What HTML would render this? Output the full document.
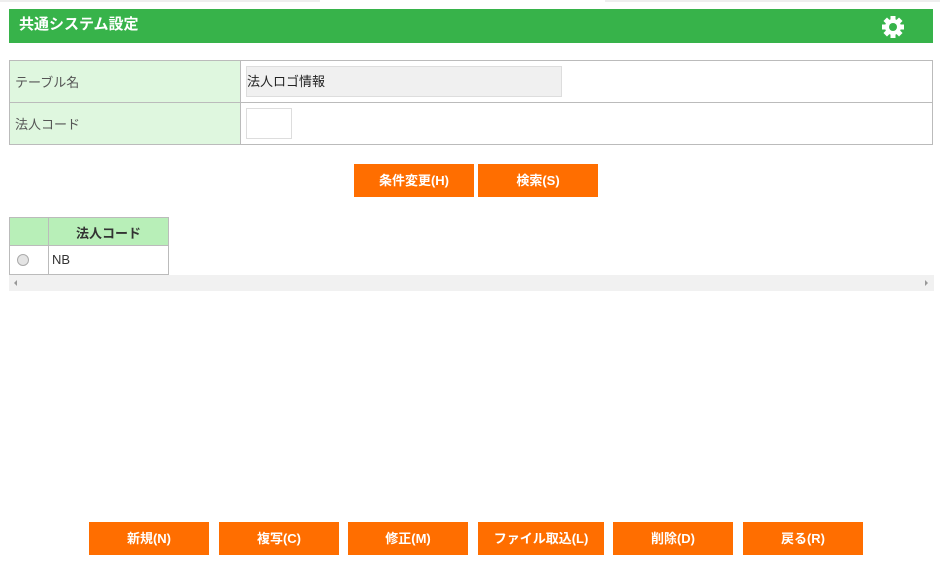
<!DOCTYPE html>
<html><head><meta charset="utf-8"><style>
*{box-sizing:border-box;margin:0;padding:0}
body{width:940px;height:566px;background:#fff;font-family:"Liberation Sans","Noto Sans CJK JP",sans-serif;font-size:13px;color:#333;position:relative;overflow:hidden}
.abs{position:absolute}
.hdr{left:9px;top:9px;width:924px;height:34px;background:#37b34a;color:#fff;font-weight:bold;font-size:15px;line-height:32px;padding-left:10px}
.btn{position:absolute;height:33px;background:#ff6e00;color:#fff;font-weight:bold;font-size:13px;text-align:center;line-height:33px}
</style></head><body>
<div class="abs" style="left:0;top:0;width:320px;height:2px;background:#eee"></div>
<div class="abs" style="left:605px;top:0;width:335px;height:2px;background:#eee"></div>
<div class="abs hdr">共通システム設定</div>
<svg class="abs" style="left:881px;top:15px" width="24" height="24" viewBox="0 0 24 24"><g fill="#fff"><circle cx="12" cy="12" r="8"/><rect x="9.5" y="1" width="5" height="22"/><rect x="1" y="9.5" width="22" height="5"/><rect x="9.5" y="1" width="5" height="22" transform="rotate(45 12 12)"/><rect x="9.5" y="1" width="5" height="22" transform="rotate(-45 12 12)"/></g><circle cx="12" cy="12" r="4" fill="#37b34a"/></svg>

<div class="abs" style="left:9px;top:60px;width:924px;height:85px;border:1px solid #bbb"></div>
<div class="abs" style="left:10px;top:61px;width:231px;height:83px;background:#dff7df;border-right:1px solid #bbb"></div>
<div class="abs" style="left:10px;top:102px;width:922px;height:1px;background:#bbb"></div>
<div class="abs" style="left:15px;top:72px;color:#555">テーブル名</div>
<div class="abs" style="left:15px;top:114px;color:#555">法人コード</div>
<div class="abs" style="left:246px;top:66px;width:316px;height:31px;background:#f0f0f0;border:1px solid #ddd;line-height:29px;color:#222">法人ロゴ情報</div>
<div class="abs" style="left:246px;top:108px;width:46px;height:31px;border:1px solid #ddd"></div>

<div class="btn" style="left:354px;top:164px;width:120px">条件変更(H)</div>
<div class="btn" style="left:478px;top:164px;width:120px">検索(S)</div>

<div class="abs" style="left:9px;top:217px;width:160px;height:58px;border:1px solid #bbb"></div>
<div class="abs" style="left:10px;top:218px;width:158px;height:28px;background:#b8efb8;border-bottom:1px solid #bbb"></div>
<div class="abs" style="left:48px;top:218px;width:1px;height:56px;background:#bbb"></div>
<div class="abs" style="left:49px;top:223px;width:119px;text-align:center;font-weight:bold;color:#333">法人コード</div>
<div class="abs" style="left:17px;top:254px;width:12px;height:12px;border-radius:50%;border:1px solid #aaa;background:#e4e4e4"></div>
<div class="abs" style="left:52px;top:252px;color:#333">NB</div>
<div class="abs" style="left:9px;top:275px;width:925px;height:16px;background:#f1f1f1"></div>
<div class="abs" style="left:14px;top:280px;width:0;height:0;border-top:3px solid transparent;border-bottom:3px solid transparent;border-right:3px solid #999"></div>
<div class="abs" style="left:925px;top:280px;width:0;height:0;border-top:3px solid transparent;border-bottom:3px solid transparent;border-left:3px solid #999"></div>

<div class="btn" style="left:89px;top:522px;width:120px">新規(N)</div>
<div class="btn" style="left:219px;top:522px;width:120px">複写(C)</div>
<div class="btn" style="left:348px;top:522px;width:120px">修正(M)</div>
<div class="btn" style="left:478px;top:522px;width:126px">ファイル取込(L)</div>
<div class="btn" style="left:613px;top:522px;width:120px">削除(D)</div>
<div class="btn" style="left:743px;top:522px;width:120px">戻る(R)</div>
</body></html>
